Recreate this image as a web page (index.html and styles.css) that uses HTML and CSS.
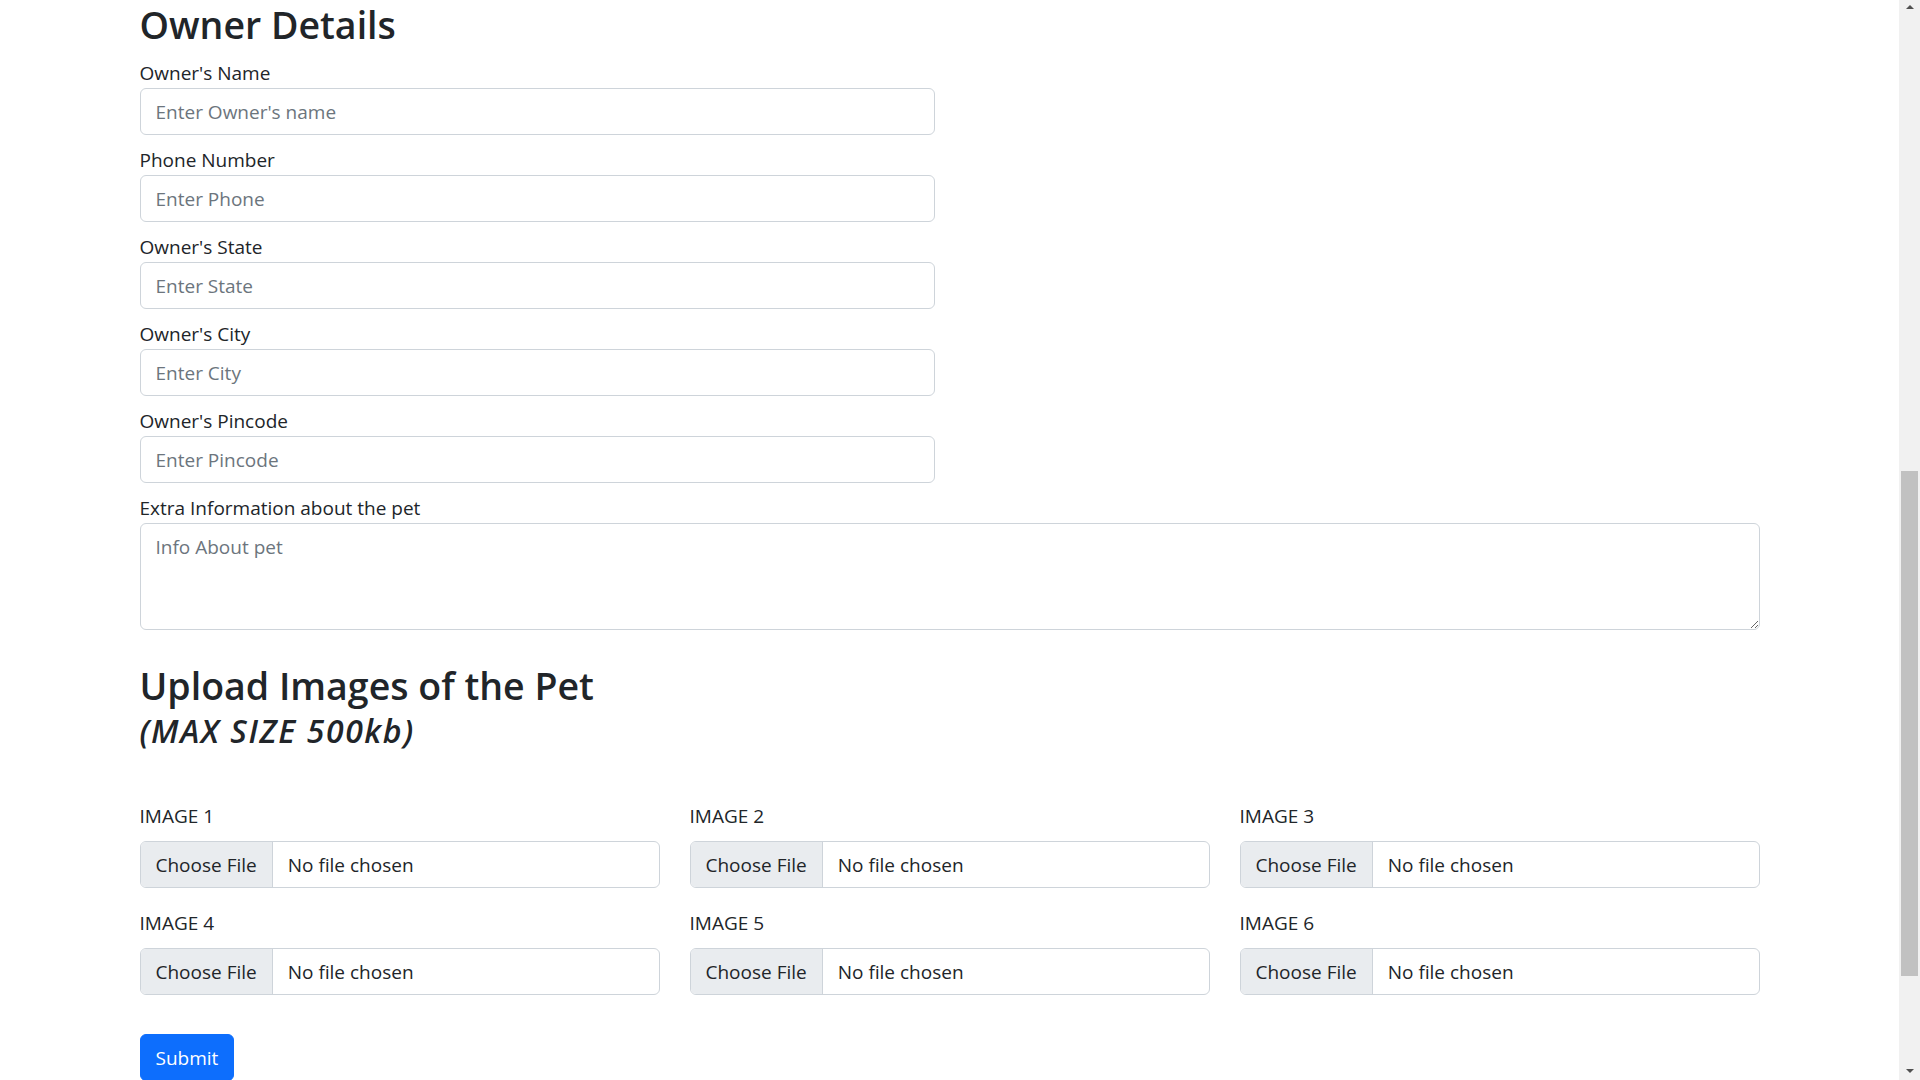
FILE: index.html
```html
<!DOCTYPE html>
<html lang="en">
<head>
<meta charset="utf-8">
<title>Pet Form</title>
<link rel="stylesheet" href="styles.css">
</head>
<body>
<div class="page">
  <main class="viewport">
    <div class="container">
      <form class="pet-form">
        <section class="owner">
          <h2 class="title">Owner Details</h2>
          <div class="owner-fields">
            <div class="field">
              <label class="field-label" for="oname">Owner's Name</label>
              <input id="oname" class="control" type="text" placeholder="Enter Owner's name">
            </div>
            <div class="field">
              <label class="field-label" for="ophone">Phone Number</label>
              <input id="ophone" class="control" type="text" placeholder="Enter Phone">
            </div>
            <div class="field">
              <label class="field-label" for="ostate">Owner's State</label>
              <input id="ostate" class="control" type="text" placeholder="Enter State">
            </div>
            <div class="field">
              <label class="field-label" for="ocity">Owner's City</label>
              <input id="ocity" class="control" type="text" placeholder="Enter City">
            </div>
            <div class="field">
              <label class="field-label" for="opin">Owner's Pincode</label>
              <input id="opin" class="control" type="text" placeholder="Enter Pincode">
            </div>
          </div>
          <div class="field">
            <label class="field-label" for="oinfo">Extra Information about the pet</label>
            <textarea id="oinfo" class="control textarea" rows="3" placeholder="Info About pet"></textarea>
          </div>
        </section>

        <section class="uploads">
          <h2 class="title title-upload">Upload Images of the Pet</h2>
          <h4 class="subtitle">(MAX SIZE 500kb)</h4>
          <div class="upload-grid">
            <div class="upload">
              <span class="field-label upload-label">IMAGE 1</span>
              <div class="file"><span class="file-btn">Choose File</span><span class="file-name">No file chosen</span></div>
            </div>
            <div class="upload">
              <span class="field-label upload-label">IMAGE 2</span>
              <div class="file"><span class="file-btn">Choose File</span><span class="file-name">No file chosen</span></div>
            </div>
            <div class="upload">
              <span class="field-label upload-label">IMAGE 3</span>
              <div class="file"><span class="file-btn">Choose File</span><span class="file-name">No file chosen</span></div>
            </div>
            <div class="upload">
              <span class="field-label upload-label">IMAGE 4</span>
              <div class="file"><span class="file-btn">Choose File</span><span class="file-name">No file chosen</span></div>
            </div>
            <div class="upload">
              <span class="field-label upload-label">IMAGE 5</span>
              <div class="file"><span class="file-btn">Choose File</span><span class="file-name">No file chosen</span></div>
            </div>
            <div class="upload">
              <span class="field-label upload-label">IMAGE 6</span>
              <div class="file"><span class="file-btn">Choose File</span><span class="file-name">No file chosen</span></div>
            </div>
          </div>
        </section>

        <button class="submit" type="button">Submit</button>
      </form>
    </div>
  </main>
  <div class="scrollbar" aria-hidden="true">
    <span class="sb-arrow sb-up"></span>
    <span class="sb-thumb"></span>
    <span class="sb-spacer"></span>
    <span class="sb-arrow sb-down"></span>
  </div>
</div>
</body>
</html>
```

FILE: styles.css
```css
html, body {
  margin: 0;
  height: 100%;
  overflow: hidden;
}

body {
  font-family: "Open Sans", "Noto Sans", sans-serif;
  font-size: 19px;
  line-height: 30px;
  color: #212529;
  background: #fff;
}

.page {
  display: flex;
  height: 100%;
}

.viewport {
  flex: 1;
  min-width: 0;
}

.container {
  box-sizing: border-box;
  max-width: 1650px;
  margin: 0 auto;
  padding: 0 15px;
}

.title {
  margin: 1px 0 9px;
  font-size: 37.5px;
  line-height: 48px;
  font-weight: 600;
}

.owner-fields {
  width: 795px;
}

.field {
  margin-bottom: 10px;
}

.field-label {
  display: block;
}

.control {
  display: block;
  width: 100%;
  box-sizing: border-box;
  height: 47px;
  margin: 0;
  padding: 7.5px 15px;
  border: 1px solid #ced4da;
  border-radius: 6px;
  font: inherit;
  line-height: 30px;
  color: #212529;
  background: #fff;
  outline: none;
}

.control::placeholder {
  color: #6c757d;
  opacity: 1;
}

.textarea {
  height: 107px;
  resize: vertical;
}

.title-upload {
  margin-top: 32px;
  margin-bottom: 3px;
}

.subtitle {
  margin: 0;
  font-size: 32px;
  line-height: 36px;
  font-style: italic;
  font-weight: 600;
  letter-spacing: 1.6px;
}

.upload-grid {
  display: grid;
  grid-template-columns: repeat(3, 1fr);
  column-gap: 30px;
  row-gap: 20px;
  margin-top: 52px;
}

.upload-label {
  margin-bottom: 10px;
}

.file {
  display: flex;
  box-sizing: border-box;
  height: 47px;
  border: 1px solid #ced4da;
  border-radius: 6px;
  overflow: hidden;
  background: #fff;
}

.file-btn {
  display: flex;
  align-items: center;
  padding: 0 15px;
  background: #e9ecef;
  border-right: 1px solid #ced4da;
}

.file-name {
  display: flex;
  align-items: center;
  padding: 0 15px;
}

.submit {
  display: block;
  margin-top: 39px;
  padding: 7.5px 15px;
  font: inherit;
  line-height: 30px;
  color: #fff;
  background: #0d6efd;
  border: 1px solid #0d6efd;
  border-radius: 6px;
}

.scrollbar {
  flex: none;
  width: 21px;
  background: #f1f1f1;
  display: flex;
  flex-direction: column;
  align-items: center;
}

.sb-arrow {
  width: 0;
  height: 0;
  border-left: 4.5px solid transparent;
  border-right: 4.5px solid transparent;
}

.sb-up {
  margin-top: 5px;
  border-bottom: 4.5px solid #505050;
}

.sb-down {
  margin-bottom: 7px;
  border-top: 4.5px solid #505050;
}

.sb-thumb {
  width: 17px;
  height: 505px;
  margin-top: 461.5px;
  background: #c1c1c1;
}

.sb-spacer {
  flex: 1;
}
```
